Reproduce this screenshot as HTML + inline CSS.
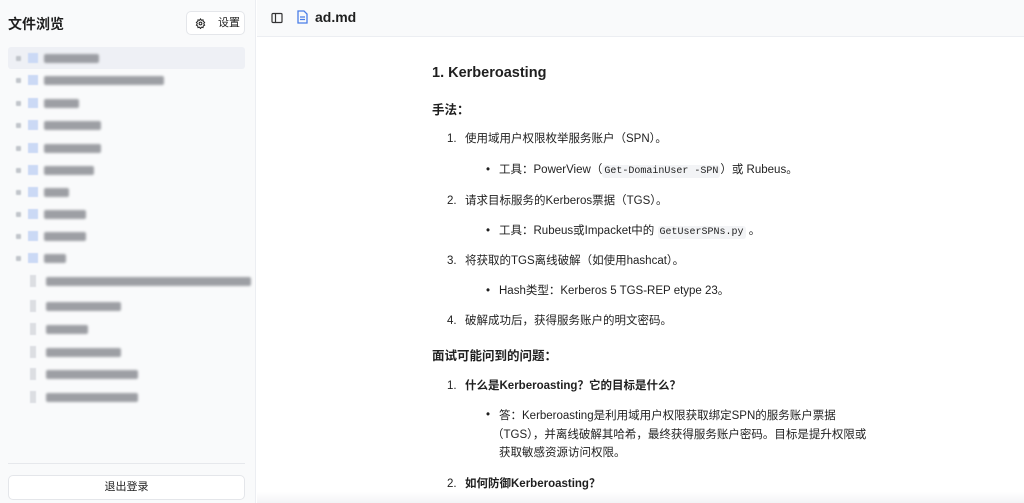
<!DOCTYPE html>
<html><head><meta charset="utf-8"><style>
*{margin:0;padding:0;box-sizing:border-box}
body{width:1024px;height:503px;overflow:hidden;background:#fff;font-family:"Liberation Sans","Noto Sans CJK SC",sans-serif;color:#1f1f1f;position:relative}
#side{position:absolute;left:0;top:0;width:256px;height:503px;background:#f9fafb;border-right:1px solid #eceef2}
.a{position:absolute;white-space:nowrap}
.row{position:absolute;left:8px;width:237px;height:22px}
.dot{position:absolute;width:5px;height:5px;background:#c0c4ca;border-radius:1px;filter:blur(.8px)}
.fold{position:absolute;width:10px;height:10px;background:#cbd9f5;filter:blur(.6px)}
.bar{position:absolute;height:9px;background:#8e9096;filter:blur(1.2px);border-radius:2px;opacity:.85}
.file{position:absolute;width:6px;height:12px;background:#dcdee2;filter:blur(.6px)}
.t{font-size:11.5px;line-height:16px}
.b{font-weight:bold}
code{font-family:"Liberation Mono",monospace;font-size:10px;background:#f3f4f6;padding:1px 2px;border-radius:3px}
</style></head><body>
<div id="side">
<div class="a b" style="left:8px;top:14px;font-size:14px">文件浏览</div>
<div class="a" style="left:186px;top:11px;width:59px;height:24px;border:1px solid #e4e6ea;border-radius:5px;background:#fff;font-size:11px;line-height:22px;padding-left:31px">设置
<svg style="position:absolute;left:8px;top:6px" width="11" height="11" viewBox="0 0 24 24" fill="none" stroke="#222" stroke-width="2.2"><circle cx="12" cy="12" r="3"/><path d="M12 2l2 3 3.5-1 .5 3.5 3 2-2 3 2 3-3 2-.5 3.5-3.5-1-2 3-2-3-3.5 1-.5-3.5-3-2 2-3-2-3 3-2 .5-3.5 3.5 1z"/></svg></div>
<div class="row" style="top:47px;background:#eef0f5;border-radius:3px"></div>
<div style="position:absolute;left:8px;top:463px;width:237px;border-top:1px solid #e6e8ec"></div>
<div class="a" style="left:8px;top:475px;width:237px;height:25px;border:1px solid #e4e6ea;border-radius:5px;background:#fff;font-size:11px;text-align:center;line-height:23px">退出登录</div>
</div>
<div id="tree"></div>
<div style="position:absolute;left:257px;top:0;width:767px;height:37px;background:#f9fafb;border-bottom:1px solid #eceef2"></div>
<svg class="a" style="left:271px;top:12px" width="12" height="12" viewBox="0 0 12 12" fill="none" stroke="#333" stroke-width="1.2"><rect x="1" y="1.5" width="10" height="9" rx="1"/><path d="M4.5 1.5v9"/></svg>
<svg class="a" style="left:297px;top:10px" width="11" height="14" viewBox="0 0 11 14" fill="none" stroke="#4a7ee8" stroke-width="1.3"><path d="M1 1h6l3 3v9H1z"/><path d="M3 7h5M3 9.5h5"/></svg>
<div class="a b" style="left:315px;top:9px;font-size:14px">ad.md</div>

<div class="a b" style="left:432px;top:65px;font-size:14.5px">1. Kerberoasting</div>
<div class="a b t" style="left:432px;top:102px;font-size:12.5px">手法：</div>
<div class="a t" style="left:447px;top:131px">1.</div><div class="a t" style="left:465px;top:131px">使用域用户权限枚举服务账户（SPN）。</div>
<div class="a t" style="left:486px;top:162px">•</div><div class="a t" style="left:499px;top:162px">工具：PowerView（<code>Get-DomainUser -SPN</code>）或 Rubeus。</div>
<div class="a t" style="left:447px;top:193px">2.</div><div class="a t" style="left:465px;top:193px">请求目标服务的Kerberos票据（TGS）。</div>
<div class="a t" style="left:486px;top:223px">•</div><div class="a t" style="left:499px;top:223px">工具：Rubeus或Impacket中的 <code>GetUserSPNs.py</code> 。</div>
<div class="a t" style="left:447px;top:253px">3.</div><div class="a t" style="left:465px;top:253px">将获取的TGS离线破解（如使用hashcat）。</div>
<div class="a t" style="left:486px;top:283px">•</div><div class="a t" style="left:499px;top:283px">Hash类型：Kerberos 5 TGS-REP etype 23。</div>
<div class="a t" style="left:447px;top:313px">4.</div><div class="a t" style="left:465px;top:313px">破解成功后，获得服务账户的明文密码。</div>
<div class="a b t" style="left:432px;top:348px;font-size:12.5px">面试可能问到的问题：</div>
<div class="a t" style="left:447px;top:378px">1.</div><div class="a t b" style="left:465px;top:378px">什么是Kerberoasting？它的目标是什么？</div>
<div class="a t" style="left:486px;top:407px">•</div>
<div class="a t" style="left:499px;top:407px;line-height:18.5px">答：Kerberoasting是利用域用户权限获取绑定SPN的服务账户票据<br><span style="margin-left:-7px">（TGS），并离线破解其哈希，最终获得服务账户密码。目标是提升权限或</span><br>获取敏感资源访问权限。</div>
<div class="a t" style="left:447px;top:476px">2.</div><div class="a t b" style="left:465px;top:476px">如何防御Kerberoasting？</div>
<div style="position:absolute;left:257px;top:492px;width:767px;height:11px;background:linear-gradient(#fff,#f3f4f6)"></div>
<script>
var ys=[58,80,103,125,148,170,192,214,236,258],ws=[55,120,35,57,57,50,25,42,42,22];
var h='';
ys.forEach(function(y,i){h+='<div class="dot" style="left:16px;top:'+(y-2)+'px"></div><div class="fold" style="left:28px;top:'+(y-5)+'px"></div><div class="bar" style="left:44px;top:'+(y-4)+'px;width:'+ws[i]+'px"></div>';});
var cy=[281,306,329,352,374,397],cw=[205,75,42,75,92,92];
cy.forEach(function(y,i){h+='<div class="file" style="left:30px;top:'+(y-6)+'px"></div><div class="bar" style="left:46px;top:'+(y-4)+'px;width:'+cw[i]+'px"></div>';});
document.getElementById('tree').innerHTML=h;
</script>
</body></html>
